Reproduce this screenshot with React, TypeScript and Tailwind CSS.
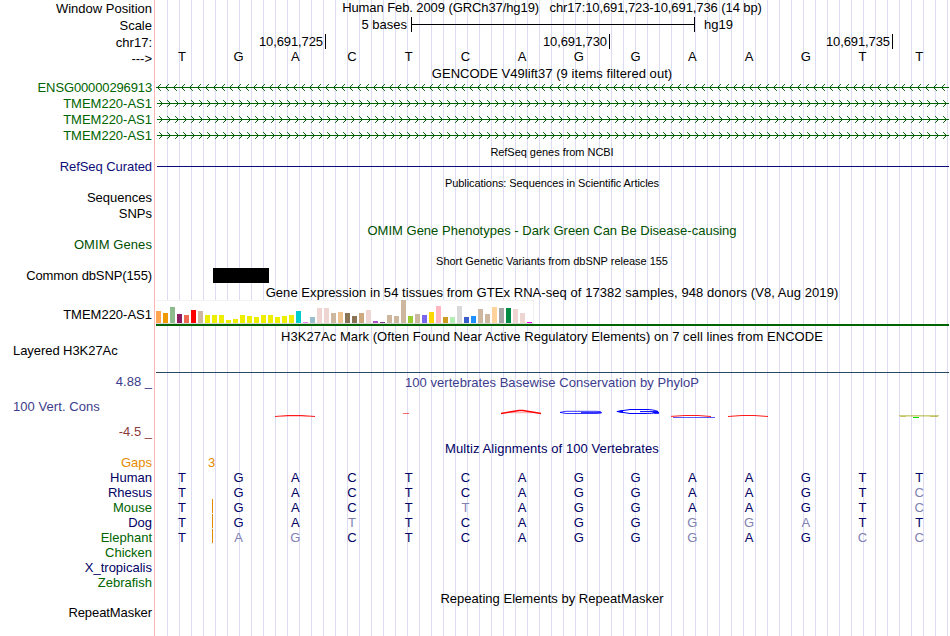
import type { ReactNode } from "react";
import clsx from "clsx";

const SEQUENCE = "TGACTCAGGAAGTT";

const GTEX_BARS: [string, number][] = [
  ["#ffa54f", 12],
  ["#ee9a00", 10],
  ["#8fbc8f", 16],
  ["#8b1c62", 9],
  ["#ee6a50", 8],
  ["#ff0000", 13],
  ["#cdb79e", 12],
  ["#eeee00", 8],
  ["#eeee00", 8],
  ["#eeee00", 8],
  ["#eeee00", 3],
  ["#eeee00", 4],
  ["#eeee00", 8],
  ["#eeee00", 7],
  ["#eeee00", 6],
  ["#eeee00", 8],
  ["#eeee00", 8],
  ["#eeee00", 6],
  ["#eeee00", 7],
  ["#eeee00", 8],
  ["#00cdcd", 12],
  ["#ee82ee", 1],
  ["#9ac0cd", 6],
  ["#eed5d2", 15],
  ["#eed5d2", 15],
  ["#cdb79e", 10],
  ["#eec591", 11],
  ["#8b7355", 10],
  ["#8b7355", 7],
  ["#cdaa7d", 10],
  ["#eed5d2", 13],
  ["#b452cd", 2],
  ["#7a378b", 1],
  ["#cdb79e", 8],
  ["#cdb79e", 7],
  ["#cdb79e", 23],
  ["#9acd32", 7],
  ["#cdb79e", 9],
  ["#7a67ee", 8],
  ["#ffd700", 11],
  ["#ffb6c1", 17],
  ["#cd9b1d", 6],
  ["#b4eeb4", 6],
  ["#d9d9d9", 17],
  ["#3a5fcd", 6],
  ["#1e90ff", 7],
  ["#cdb79e", 14],
  ["#cdb79e", 9],
  ["#ffd39b", 16],
  ["#a6a6a6", 15],
  ["#008b45", 15],
  ["#eed5d2", 14],
  ["#eed5d2", 10],
  ["#ff00ff", 1],
];

// lower case letters are mismatches against the human base
const ALIGNMENTS = [
  { name: "Human", color: "text-[#000064]", bases: "TGACTCAGGAAGTT" },
  { name: "Rhesus", color: "text-[#000064]", bases: "TGACTCAGGAAGTc" },
  { name: "Mouse", color: "text-[#006400]", bases: "TGACTtAGGAAGTc", gap: true },
  { name: "Dog", color: "text-[#000064]", bases: "TGAtTCAGGggaTT", gap: true },
  { name: "Elephant", color: "text-[#006400]", bases: "TagCTCAGGgAGcc", gap: true },
  { name: "Chicken", color: "text-[#006400]", bases: "" },
  { name: "X_tropicalis", color: "text-[#000064]", bases: "" },
  { name: "Zebrafish", color: "text-[#006400]", bases: "" },
];

interface RowProps {
  height: string;
  label?: ReactNode;
  labelClass?: string;
  children?: ReactNode;
}

function Row({ height, label, labelClass, children }: RowProps) {
  return (
    <div className={clsx("flex w-full shrink-0", height)}>
      <div
        className={clsx(
          "w-[155px] shrink-0 pr-[3px] text-right leading-[15px]",
          labelClass,
        )}
      >
        {label}
      </div>
      <div className="min-w-0 flex-1">{children}</div>
    </div>
  );
}

function Title({ className, children }: { className?: string; children: ReactNode }) {
  return (
    <div className={clsx("flex w-[794px] justify-center leading-[15px]", className)}>
      <span className="shrink-0 whitespace-pre">{children}</span>
    </div>
  );
}

function Bases({ bases, className }: { bases: string; className?: string }) {
  return (
    <div className={clsx("-ml-[1.5px] flex w-[794px] leading-[15px]", className)}>
      {bases.split("").map((base, i) => (
        <span
          key={i}
          className={clsx(
            "flex-1 text-center",
            base !== base.toUpperCase() && "text-[#8080b1]",
          )}
        >
          {base.toUpperCase()}
        </span>
      ))}
    </div>
  );
}

function Transcript({ reverse }: { reverse?: boolean }) {
  const ticks = Array.from({ length: 99 }, (_, i) => i * 8);
  return (
    <svg
      width="795"
      height="16"
      viewBox="0 0 795 16"
      fill="none"
      stroke="#006400"
      className="block"
    >
      <path d={reverse ? "M1 7.5H794" : "M2 7.5H794"} shapeRendering="crispEdges" />
      {ticks.map((x) => (
        <path
          key={x}
          strokeLinecap="square"
          d={
            reverse
              ? `M${x + 5.5} 4.5L${x + 2.5} 7.5L${x + 5.5} 10.5`
              : `M${x + 4.5} 4.5L${x + 7.5} 7.5L${x + 4.5} 10.5`
          }
        />
      ))}
    </svg>
  );
}

function GtexGraph() {
  return (
    <div className="flex flex-col">
      <div className="ml-px flex h-6 w-[378px] items-end gap-[2px] border-t border-r border-b border-t-[#f2f2f2] border-r-[#f2f2f2] border-b-[#d8d8d8] bg-white">
        {GTEX_BARS.map(([color, height], i) => (
          <div
            key={i}
            className="w-[5px] shrink-0"
            style={{ backgroundColor: color, height }}
          />
        ))}
      </div>
      <div className="ml-px h-[2px] w-[793px] bg-[#006400]" />
    </div>
  );
}

function ConservationLogo() {
  return (
    <svg
      width="795"
      height="20"
      viewBox="155 403 795 20"
      fill="none"
      strokeLinecap="butt"
      className="block"
    >
      <path d="M275 416.5L288 415.5H301L315 416.5" stroke="#ff0000" strokeWidth="0.9" />
      <path d="M281 416.5H309" stroke="#ff0000" strokeOpacity="0.2" />
      <path d="M403 413.5H409" stroke="#ff0000" strokeOpacity="0.6" />
      <path d="M501 413.5L519 410.4H523L541 413.5" stroke="#ff0000" strokeWidth="1.5" />
      <path d="M509 412.7H533" stroke="#ff0000" strokeOpacity="0.5" strokeWidth="0.7" />
      <path
        d="M601 411.8L597 411.3H566L560 412.4L566 413.5H597L601.5 413V412.5H581"
        stroke="#0000ff"
        strokeWidth="0.8"
      />
      <path
        d="M658 411.5C655 410 651 409.5 645 409.5H630L617 411.5L630 413.5H645C652 413.5 656 412.8 658 412.6V411.6H640"
        stroke="#0000ff"
      />
      <path d="M616 411.5L623 410V413Z" fill="#0000ff" />
      <path d="M652 412H659V413.8H655Z" fill="#0000ff" />
      <path d="M671 416.4L685 415.5H698L711 416.5" stroke="#ff0000" strokeWidth="0.9" />
      <path d="M673 417.5H715" stroke="#3030ff" strokeWidth="0.8" />
      <path d="M728 416.5L742 415.5H754L768 416.5" stroke="#ff0000" strokeWidth="0.9" />
      <path d="M899 415.6H939" stroke="#a0a000" strokeOpacity="0.6" strokeWidth="0.9" />
      <path d="M900 416.5H906M930 416.5H938" stroke="#a0a000" strokeOpacity="0.6" />
      <path d="M906 416.5H930" stroke="#a0a000" strokeOpacity="0.25" />
      <path d="M913 417.5H919" stroke="#00e000" />
    </svg>
  );
}

export default function App() {
  return (
    <div className="h-[636px] w-[950px] overflow-hidden bg-white font-['Liberation_Sans',Arial,sans-serif] text-[13px] text-black">
      <div className="flex h-full w-full flex-col bg-[linear-gradient(90deg,transparent_154px,#ffb4b4_154px,#ffb4b4_155px,#fff_155px,#fff_166px,transparent_166px),repeating-linear-gradient(90deg,#dcdcf5_0px,#dcdcf5_1px,#fff_1px,#fff_12px)] bg-[position:0_0,167px_0] bg-no-repeat">
        <Row height="h-4" label="Window Position" labelClass="pt-px">
          <Title className="tracking-[-0.09px]">
            {"Human Feb. 2009 (GRCh37/hg19)   chr17:10,691,723-10,691,736 (14 bp)"}
          </Title>
        </Row>
        <Row height="h-[18px]" label="Scale" labelClass="pt-[2px]">
          <div className="flex h-full pt-px leading-[15px]">
            <div className="w-[256px] pr-1 text-right">5 bases</div>
            <div className="flex h-[15px] w-[284px] items-center border-x border-black">
              <div className="h-px w-full bg-black" />
            </div>
            <div className="pl-[9px]">hg19</div>
          </div>
        </Row>
        <Row height="h-[15px]" label="chr17:" labelClass="pt-px">
          <div className="flex leading-[15px] tracking-[-0.1px]">
            <div className="w-[171px] border-r border-black pr-[2px] text-right">10,691,725</div>
            <div className="w-[284px] border-r border-black pr-[2px] text-right">10,691,730</div>
            <div className="w-[283px] border-r border-black pr-[2px] text-right">10,691,735</div>
          </div>
        </Row>
        <Row height="h-[17px]" label="--->" labelClass="pt-[2px]">
          <Bases bases={SEQUENCE} />
        </Row>
        <Row height="h-[14px]">
          <Title className="tracking-[0.05px]">GENCODE V49lift37 (9 items filtered out)</Title>
        </Row>
        <Row
          height="h-4"
          label="ENSG00000296913"
          labelClass="text-[#006400] tracking-[-0.13px]"
        >
          <Transcript reverse />
        </Row>
        {[0, 1, 2].map((i) => (
          <Row key={i} height="h-4" label="TMEM220-AS1" labelClass="text-[#006400]">
            <Transcript />
          </Row>
        ))}
        <Row height="h-[15px]">
          <Title className="pt-px text-[11px] tracking-[-0.04px]">RefSeq genes from NCBI</Title>
        </Row>
        <Row
          height="h-4"
          label="RefSeq Curated"
          labelClass="text-[#0c0c78] tracking-[-0.07px]"
        >
          <div className="mt-[7px] ml-[2px] h-px w-[792px] bg-[#0c0c78]" />
        </Row>
        <Row height="h-[15px]">
          <Title className="pt-px text-[11px] tracking-[-0.08px]">
            Publications: Sequences in Scientific Articles
          </Title>
        </Row>
        <Row height="h-4" label="Sequences" />
        <Row height="h-4" label="SNPs" />
        <Row height="h-[15px]">
          <Title className="pt-px tracking-[0.01px] text-[#005000]">
            OMIM Gene Phenotypes - Dark Green Can Be Disease-causing
          </Title>
        </Row>
        <Row
          height="h-4"
          label="OMIM Genes"
          labelClass="text-[#005000] tracking-[0.08px]"
        />
        <Row height="h-[15px]">
          <Title className="pt-px text-[11px] tracking-[-0.03px]">
            Short Genetic Variants from dbSNP release 155
          </Title>
        </Row>
        <Row height="h-4" label="Common dbSNP(155)" labelClass="tracking-[-0.12px]">
          <div className="ml-[58px] h-[15px] w-14 bg-black" />
        </Row>
        <Row height="h-4">
          <Title className="pt-px tracking-[0.06px]">
            Gene Expression in 54 tissues from GTEx RNA-seq of 17382 samples, 948 donors (V8, Aug 2019)
          </Title>
        </Row>
        <Row height="h-7" label="TMEM220-AS1" labelClass="pt-[7px]">
          <GtexGraph />
        </Row>
        <Row height="h-[15px]">
          <Title className="pt-px tracking-[0.05px]">
            H3K27Ac Mark (Often Found Near Active Regulatory Elements) on 7 cell lines from ENCODE
          </Title>
        </Row>
        <Row
          height="h-8"
          label={<div className="pl-[13px] text-left tracking-[-0.06px]">Layered H3K27Ac</div>}
        >
          <div className="mt-[29px] ml-px h-px w-[793px] bg-[#2a4a64]" />
        </Row>
        <Row
          height="h-[66px]"
          label={
            <div className="-mt-px flex flex-col text-[#3c3c8c]">
              <span>4.88 _</span>
              <span className="pt-[10px] pl-[13px] text-left tracking-[0.06px]">
                100 Vert. Cons
              </span>
              <span className="pt-[10px] text-[#8c3c3c]">-4.5 _</span>
            </div>
          }
        >
          <Title className="tracking-[0.04px] text-[#3c3c8c]">
            100 vertebrates Basewise Conservation by PhyloP
          </Title>
          <div className="pt-[13px]">
            <ConservationLogo />
          </div>
        </Row>
        <Row height="h-[14px]">
          <Title className="tracking-[0.08px] text-[#000064]">
            Multiz Alignments of 100 Vertebrates
          </Title>
        </Row>
        <Row height="h-[15px]" label="Gaps" labelClass="text-[#e68a00]">
          <div className="pl-[53px] leading-[15px] text-[#e68a00]">3</div>
        </Row>
        {ALIGNMENTS.map((species) => (
          <Row
            key={species.name}
            height="h-[15px]"
            label={species.name}
            labelClass={species.color}
          >
            <div className="relative">
              <Bases bases={species.bases} className="text-[#000064]" />
              {species.gap && (
                <div className="absolute -top-px left-[57px] h-[14px] w-px bg-[#e68a00]" />
              )}
            </div>
          </Row>
        ))}
        <Row height="h-[15px]">
          <Title className="pt-px tracking-[0.02px]">Repeating Elements by RepeatMasker</Title>
        </Row>
        <Row height="h-4" label="RepeatMasker" labelClass="tracking-[-0.08px]" />
      </div>
    </div>
  );
}
